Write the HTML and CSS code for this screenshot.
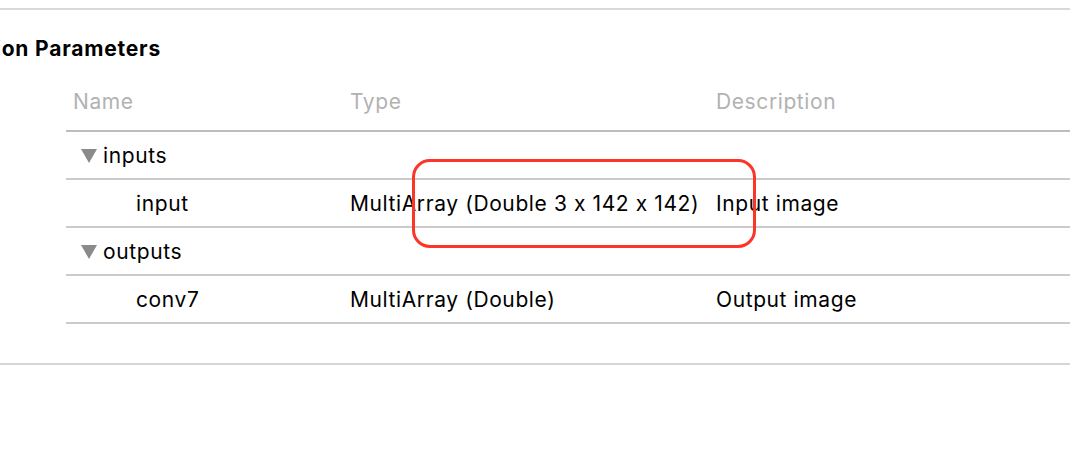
FILE: index.html
```html
<!DOCTYPE html>
<html>
<head>
<meta charset="utf-8">
<link rel="stylesheet" href="styles.css">
</head>
<body>
<div class="page">
  <div class="rule"></div>
  <div class="title"><span>Model Evaluation Parameters</span></div>
  <div class="table">
    <div class="row head">
      <div class="c name">Name</div>
      <div class="c">Type</div>
      <div class="c">Description</div>
    </div>
    <div class="row">
      <div class="c group"><span class="tri"></span>inputs</div>
      <div class="c"></div>
      <div class="c"></div>
    </div>
    <div class="row">
      <div class="c child">input</div>
      <div class="c">MultiArray (Double 3 x 142 x 142)</div>
      <div class="c">Input image</div>
    </div>
    <div class="row">
      <div class="c group"><span class="tri"></span>outputs</div>
      <div class="c"></div>
      <div class="c"></div>
    </div>
    <div class="row">
      <div class="c child">conv7</div>
      <div class="c">MultiArray (Double)</div>
      <div class="c">Output image</div>
    </div>
  </div>
  <div class="rule bottom"></div>
  <div class="highlight"></div>
</div>
</body>
</html>
```

FILE: styles.css
```css
html, body {
  margin: 0;
  padding: 0;
  background: #ffffff;
}
body {
  font-family: Inter, "Liberation Sans", sans-serif;
  font-feature-settings: "calt" 0;
  color: #000;
  width: 1070px;
  height: 474px;
  overflow: hidden;
}
.page {
  position: relative;
  padding-top: 8px;
}
.rule {
  height: 2px;
  background: #d9d9d9;
}
.rule.bottom {
  margin-top: 39px;
  background: #d6d6d6;
}
.title {
  margin-top: 26px;
  width: 161px;
  height: 26px;
  display: flex;
  justify-content: flex-end;
  overflow: hidden;
  white-space: nowrap;
  font-weight: 700;
  font-size: 21px;
  letter-spacing: 0.8px;
  line-height: 26px;
}
.table {
  margin-top: 16px;
  margin-left: 66px;
}
.row {
  display: grid;
  grid-template-columns: 284px 366px 1fr;
  height: 46px;
  align-items: center;
  border-bottom: 2px solid #cbcbcb;
  font-size: 21px;
  letter-spacing: 0.6px;
}
.row.head {
  height: 46px;
  padding-bottom: 6px;
  color: #b2b2b2;
  border-bottom-color: #bdbdbd;
}
.c {
  white-space: nowrap;
}
.c.name {
  padding-left: 7px;
}
.c.child {
  padding-left: 70px;
}
.c.group {
  padding-left: 15px;
  display: flex;
  align-items: center;
}
.tri {
  width: 0;
  height: 0;
  border-left: 8.5px solid transparent;
  border-right: 8.5px solid transparent;
  border-top: 14px solid #8a8a8a;
  margin-right: 6px;
  margin-top: 1px;
}
.highlight {
  position: absolute;
  left: 412px;
  top: 159px;
  width: 338px;
  height: 83px;
  border: 3.5px solid #fc3527;
  border-radius: 18px;
}
```
